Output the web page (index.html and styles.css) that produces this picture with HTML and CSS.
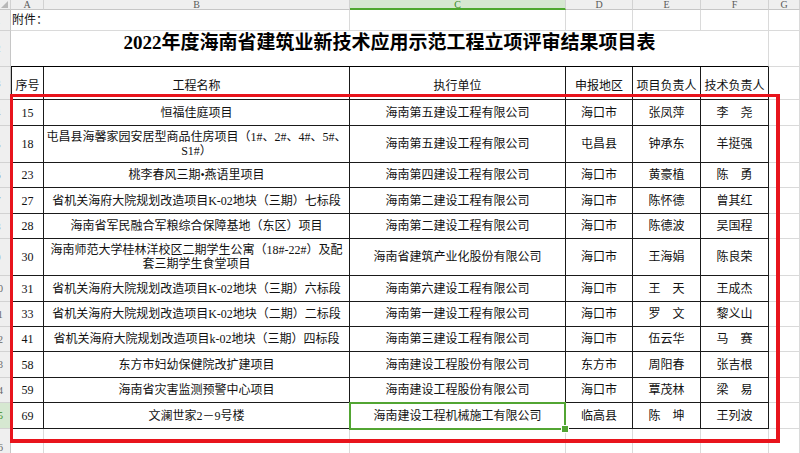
FILE: index.html
```html
<!DOCTYPE html>
<html lang="zh-CN">
<head>
<meta charset="utf-8">
<title>2022年度海南省建筑业新技术应用示范工程立项评审结果项目表</title>
<link rel="stylesheet" href="styles.css">
</head>
<body>
<div class="sheet">
  <!-- column headers -->
  <div class="ch corner"></div>
  <div class="ch">A</div>
  <div class="ch">B</div>
  <div class="ch sel">C</div>
  <div class="ch">D</div>
  <div class="ch">E</div>
  <div class="ch">F</div>
  <div class="ch">G</div>

  <!-- row 1 -->
  <div class="rh"><span>1</span></div>
  <div class="c note">附件：</div>
  <div class="c"></div>
  <div class="c"></div>
  <div class="c"></div>
  <div class="c"></div>
  <div class="c"></div>

  <!-- row 2 -->
  <div class="rh"><span>2</span></div>
  <div class="c title">2022年度海南省建筑业新技术应用示范工程立项评审结果项目表</div>
  <div class="c"></div>

  <!-- row 3 -->
  <div class="rh"><span>3</span></div>
  <div class="c t tl hd">序号</div>
  <div class="c t hd">工程名称</div>
  <div class="c t hd">执行单位</div>
  <div class="c t hd">申报地区</div>
  <div class="c t hd">项目负责人</div>
  <div class="c t hd">技术负责人</div>
  <div class="c"></div>

  <!-- row 4 -->
  <div class="rh"><span>4</span></div>
  <div class="c t tl">15</div>
  <div class="c t">恒福佳庭项目</div>
  <div class="c t">海南第五建设工程有限公司</div>
  <div class="c t">海口市</div>
  <div class="c t">张凤萍</div>
  <div class="c t">李　尧</div>
  <div class="c"></div>

  <!-- row 5 -->
  <div class="rh"><span>5</span></div>
  <div class="c t tl">18</div>
  <div class="c t">屯昌县海馨家园安居型商品住房项目（1#、2#、4#、5#、<br>S1#）</div>
  <div class="c t">海南第五建设工程有限公司</div>
  <div class="c t">屯昌县</div>
  <div class="c t">钟承东</div>
  <div class="c t">羊挺强</div>
  <div class="c"></div>

  <!-- row 6 -->
  <div class="rh"><span>6</span></div>
  <div class="c t tl">23</div>
  <div class="c t">桃李春风三期•燕语里项目</div>
  <div class="c t">海南第四建设工程有限公司</div>
  <div class="c t">海口市</div>
  <div class="c t">黄豪植</div>
  <div class="c t">陈　勇</div>
  <div class="c"></div>

  <!-- row 7 -->
  <div class="rh"><span>7</span></div>
  <div class="c t tl">27</div>
  <div class="c t">省机关海府大院规划改造项目K-02地块（三期）七标段</div>
  <div class="c t">海南第二建设工程有限公司</div>
  <div class="c t">海口市</div>
  <div class="c t">陈怀德</div>
  <div class="c t">曾其红</div>
  <div class="c"></div>

  <!-- row 8 -->
  <div class="rh"><span>8</span></div>
  <div class="c t tl">28</div>
  <div class="c t">海南省军民融合军粮综合保障基地（东区）项目</div>
  <div class="c t">海南第二建设工程有限公司</div>
  <div class="c t">海口市</div>
  <div class="c t">陈德波</div>
  <div class="c t">吴国程</div>
  <div class="c"></div>

  <!-- row 9 -->
  <div class="rh"><span>9</span></div>
  <div class="c t tl">30</div>
  <div class="c t">海南师范大学桂林洋校区二期学生公寓（18#-22#）及配<br>套三期学生食堂项目</div>
  <div class="c t">海南省建筑产业化股份有限公司</div>
  <div class="c t">海口市</div>
  <div class="c t">王海娟</div>
  <div class="c t">陈良荣</div>
  <div class="c"></div>

  <!-- row 10 -->
  <div class="rh"><span>10</span></div>
  <div class="c t tl">31</div>
  <div class="c t">省机关海府大院规划改造项目K-02地块（三期）六标段</div>
  <div class="c t">海南第六建设工程有限公司</div>
  <div class="c t">海口市</div>
  <div class="c t">王　天</div>
  <div class="c t">王成杰</div>
  <div class="c"></div>

  <!-- row 11 -->
  <div class="rh"><span>11</span></div>
  <div class="c t tl">33</div>
  <div class="c t">省机关海府大院规划改造项目K-02地块（二期）二标段</div>
  <div class="c t">海南第一建设工程有限公司</div>
  <div class="c t">海口市</div>
  <div class="c t">罗　文</div>
  <div class="c t">黎义山</div>
  <div class="c"></div>

  <!-- row 12 -->
  <div class="rh"><span>12</span></div>
  <div class="c t tl">41</div>
  <div class="c t">省机关海府大院规划改造项目k-02地块（三期）四标段</div>
  <div class="c t">海南第三建设工程有限公司</div>
  <div class="c t">海口市</div>
  <div class="c t">伍云华</div>
  <div class="c t">马　赛</div>
  <div class="c"></div>

  <!-- row 13 -->
  <div class="rh"><span>13</span></div>
  <div class="c t tl">58</div>
  <div class="c t">东方市妇幼保健院改扩建项目</div>
  <div class="c t">海南建设工程股份有限公司</div>
  <div class="c t">东方市</div>
  <div class="c t">周阳春</div>
  <div class="c t">张吉根</div>
  <div class="c"></div>

  <!-- row 14 -->
  <div class="rh"><span>14</span></div>
  <div class="c t tl">59</div>
  <div class="c t">海南省灾害监测预警中心项目</div>
  <div class="c t">海南建设工程股份有限公司</div>
  <div class="c t">海口市</div>
  <div class="c t">覃茂林</div>
  <div class="c t">梁　易</div>
  <div class="c"></div>

  <!-- row 15 -->
  <div class="rh sel"><span>15</span></div>
  <div class="c t tl">69</div>
  <div class="c t">文澜世家2－9号楼</div>
  <div class="c t active">海南建设工程机械施工有限公司</div>
  <div class="c t">临高县</div>
  <div class="c t">陈　坤</div>
  <div class="c t">王列波</div>
  <div class="c"></div>

  <!-- row 16 -->
  <div class="rh"><span>16</span></div>
  <div class="c"></div>
  <div class="c"></div>
  <div class="c"></div>
  <div class="c"></div>
  <div class="c"></div>
  <div class="c"></div>
  <div class="c"></div>

  <div class="mark"></div>
</div>
</body>
</html>
```

FILE: styles.css
```css
* {
  box-sizing: border-box;
  margin: 0;
  padding: 0;
}

html,
body {
  width: 800px;
  height: 453px;
  overflow: hidden;
  background: #ffffff;
}

body {
  font-family: "Liberation Serif", "Noto Sans CJK SC", serif;
  font-size: 12px;
  color: #111111;
}

.sheet {
  position: relative;
  display: grid;
  grid-template-columns: 11px 33px 306px 216px 67px 68px 68px 31px;
  grid-template-rows: 10px 21px 36px 33px 26px 37px 25px 26px 25px 37px 26px 25px 25px 26px 25px 26px 38px;
}

/* column headers */
.ch {
  background: #efefef;
  border-right: 1px solid #d2d2d2;
  border-bottom: 1px solid #c6c6c6;
  font-family: "Liberation Serif", serif;
  font-size: 10px;
  line-height: 9px;
  color: #5a5a5a;
  display: flex;
  justify-content: center;
  align-items: flex-start;
  overflow: hidden;
}

.ch.sel {
  background: #d6e8d1;
  color: #3c8b26;
  border-bottom: 2px solid #4ea82f;
}

.corner {
  position: relative;
}

.corner::after {
  content: "";
  position: absolute;
  right: 2px;
  bottom: 1px;
  width: 0;
  height: 0;
  border-left: 7px solid transparent;
  border-bottom: 7px solid #b8b8b8;
}

/* row headers */
.rh {
  background: #efefef;
  border-right: 1px solid #c6c6c6;
  border-bottom: 1px solid #d2d2d2;
  overflow: hidden;
  display: flex;
  align-items: center;
  font-family: "Liberation Serif", serif;
  font-size: 10px;
  color: #666666;
}

.rh span {
  display: block;
  flex: none;
  width: 20px;
  margin-left: -12px;
  text-align: center;
}

.rh.sel {
  background: #d6e8d1;
  color: #3c8b26;
}

/* cells */
.c {
  border-right: 1px solid #dadada;
  border-bottom: 1px solid #dadada;
  display: flex;
  align-items: center;
  justify-content: center;
  text-align: center;
  line-height: 14px;
  white-space: nowrap;
}

.note {
  grid-column: 2 / 4;
  justify-content: flex-start;
  padding-left: 1px;
  font-size: 12px;
}

.title {
  grid-column: 2 / 8;
  font-size: 19px;
  font-weight: bold;
  line-height: 22px;
  padding-bottom: 11px;
  border-bottom: 1px solid #000000;
  color: #000000;
}

.t {
  border-right: 1px solid #1a1a1a;
  border-bottom: 1px solid #1a1a1a;
}

.tl {
  border-left: 1px solid #1a1a1a;
}

.hd {
  align-items: flex-start;
  padding-top: 12px;
}

.active {
  position: relative;
}

.active::after {
  content: "";
  position: absolute;
  left: -1px;
  top: -1px;
  right: -1px;
  bottom: -2px;
  border: 2px solid #52a533;
}

.active::before {
  content: "";
  position: absolute;
  right: -4px;
  bottom: -5px;
  width: 6px;
  height: 6px;
  background: #52a533;
  border: 1px solid #ffffff;
  z-index: 2;
}

/* red highlight frame drawn over the table */
.mark {
  position: absolute;
  left: 10px;
  top: 94px;
  width: 770px;
  height: 349px;
  border-style: solid;
  border-color: #e8141c;
  border-width: 3px 4px 4px 3px;
  pointer-events: none;
}
```
